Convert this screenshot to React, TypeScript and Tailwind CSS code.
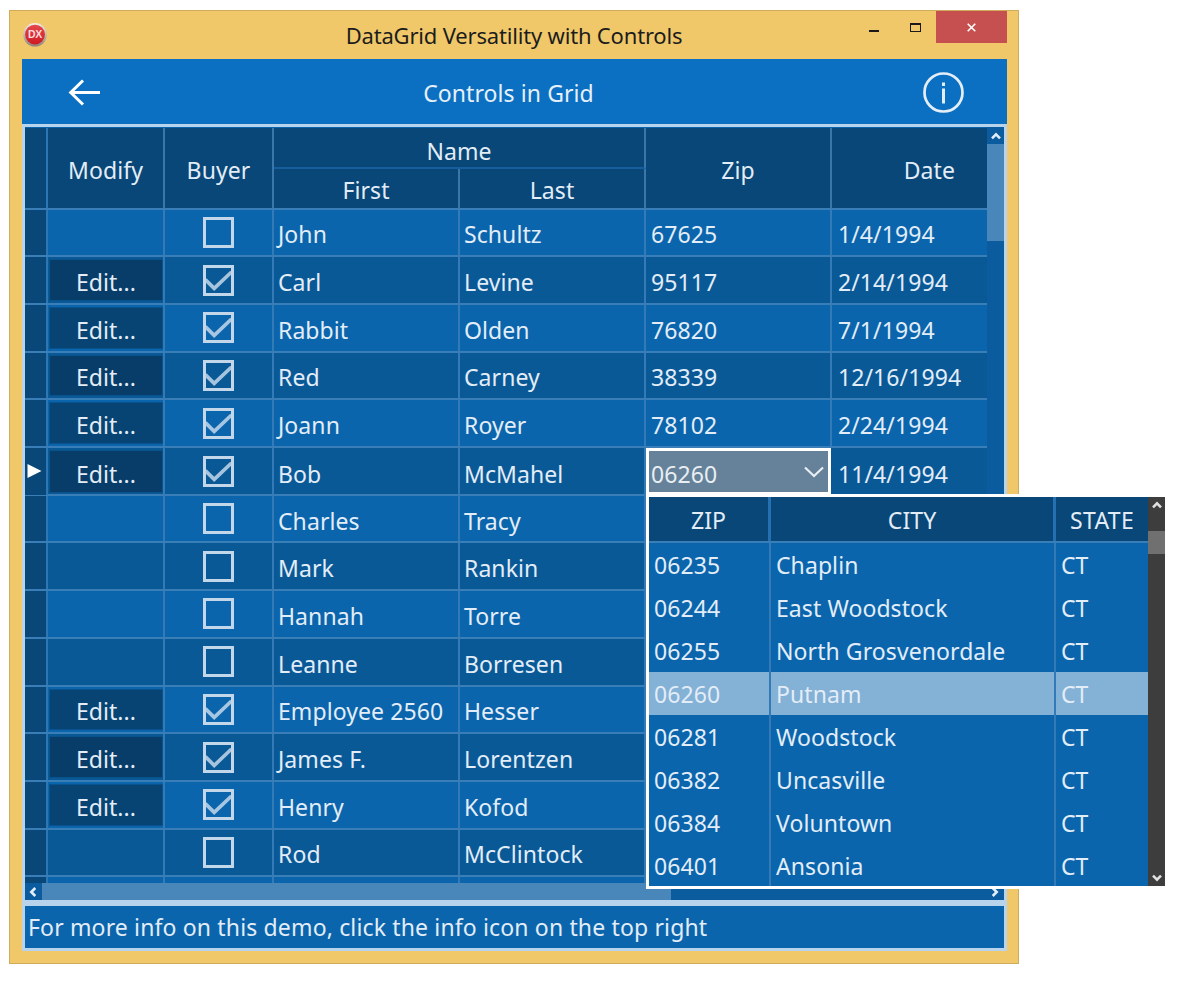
import { clsx } from 'clsx';

type Person = {
  buyer: boolean;
  first: string;
  last: string;
  zip?: string;
  date?: string;
};

const people: Person[] = [
  { buyer: false, first: 'John', last: 'Schultz', zip: '67625', date: '1/4/1994' },
  { buyer: true, first: 'Carl', last: 'Levine', zip: '95117', date: '2/14/1994' },
  { buyer: true, first: 'Rabbit', last: 'Olden', zip: '76820', date: '7/1/1994' },
  { buyer: true, first: 'Red', last: 'Carney', zip: '38339', date: '12/16/1994' },
  { buyer: true, first: 'Joann', last: 'Royer', zip: '78102', date: '2/24/1994' },
  { buyer: true, first: 'Bob', last: 'McMahel', zip: '06260', date: '11/4/1994' },
  { buyer: false, first: 'Charles', last: 'Tracy' },
  { buyer: false, first: 'Mark', last: 'Rankin' },
  { buyer: false, first: 'Hannah', last: 'Torre' },
  { buyer: false, first: 'Leanne', last: 'Borresen' },
  { buyer: true, first: 'Employee 2560', last: 'Hesser' },
  { buyer: true, first: 'James F.', last: 'Lorentzen' },
  { buyer: true, first: 'Henry', last: 'Kofod' },
  { buyer: false, first: 'Rod', last: 'McClintock' },
];

const cities = [
  { zip: '06235', city: 'Chaplin' },
  { zip: '06244', city: 'East Woodstock' },
  { zip: '06255', city: 'North Grosvenordale' },
  { zip: '06260', city: 'Putnam' },
  { zip: '06281', city: 'Woodstock' },
  { zip: '06382', city: 'Uncasville' },
  { zip: '06384', city: 'Voluntown' },
  { zip: '06401', city: 'Ansonia' },
];

const activeRow = 5;
const selectedZip = '06260';

const gridColumns = 'grid grid-cols-[23px_117px_109px_186px_186px_186px_155px]';
const lookupColumns = 'grid grid-cols-[122px_285px_92px]';

function Chevron({ className }: { className?: string }) {
  return (
    <svg viewBox="0 0 12 8" className={clsx('w-3 h-2 shrink-0', className)} fill="none" stroke="currentColor" strokeWidth="2.6">
      <path d="M2 6.3 L6 2.3 L10 6.3" />
    </svg>
  );
}

function Checkbox({ checked }: { checked: boolean }) {
  return (
    <svg width="31" height="31" viewBox="0 0 31 31" fill="none" className="text-[#c3d7ea]" stroke="currentColor">
      <rect x="1.5" y="1.5" width="28" height="28" strokeWidth="3" />
      {checked && <path d="M2.3 14.6 L11.2 23.4 L28.5 7" strokeWidth="3.6" strokeOpacity="0.85" />}
    </svg>
  );
}

function TitleBar() {
  return (
    <div className="relative flex h-12 shrink-0 items-start">
      <svg width="24" height="26" viewBox="0 0 24 26" className="ml-[13px] mt-[11px]">
        <defs>
          <linearGradient id="rim" x1="0" y1="0" x2="0" y2="1">
            <stop offset="0" stopColor="#f3ede4" />
            <stop offset="1" stopColor="#8f8379" />
          </linearGradient>
          <linearGradient id="disc" x1="0" y1="0" x2="0" y2="1">
            <stop offset="0" stopColor="#e4474c" />
            <stop offset="1" stopColor="#cf1a22" />
          </linearGradient>
        </defs>
        <circle cx="12" cy="12.8" r="11.8" fill="url(#rim)" />
        <circle cx="12" cy="12.6" r="9.9" fill="url(#disc)" />
        <text x="12" y="16.2" textAnchor="middle" fontSize="10.5" fontWeight="700" fill="#fbdcdc" fontFamily="Liberation Sans, sans-serif" letterSpacing="-0.3">
          DX
        </text>
      </svg>
      <h1 className="absolute inset-x-0 top-2 text-center text-[22px] leading-8 tracking-[-0.18px] text-[#1c1c1c]">DataGrid Versatility with Controls</h1>
      <div className="ml-auto mr-[11px] flex">
        <div className="mt-[19px] h-[2px] w-[10px] bg-[#1a1a1a]" />
        <div className="ml-[31px] mt-3 h-[9px] w-[11px] border-[1.5px] border-t-2 border-[#1a1a1a]" />
        <div className="ml-[15px] flex h-8 w-[71px] items-center justify-center bg-[#c65050] pr-px text-white">
          <svg width="9" height="9" viewBox="0 0 9 9" fill="none" stroke="currentColor" strokeWidth="1.6">
            <path d="M0.7 0.7 L8.3 8.3 M8.3 0.7 L0.7 8.3" />
          </svg>
        </div>
      </div>
    </div>
  );
}

function AppHeader() {
  return (
    <div className="relative flex h-[65px] shrink-0 items-center justify-between bg-[#0b70c1] pl-[46px] pr-[43px] text-white">
      <svg width="33" height="28" viewBox="0 0 33 28" fill="none" stroke="currentColor" strokeWidth="3">
        <path d="M2.5 14.5 H32 M15 2.5 L2.7 14.5 L15 26.5" />
      </svg>
      <div className="absolute inset-x-0 top-[18px] pr-3 text-center text-[#e6f0fa]">Controls in Grid</div>
      <svg width="41" height="41" viewBox="0 0 41 41" fill="none" className="mt-0.5 text-[#e3eef9]" stroke="currentColor">
        <circle cx="20.5" cy="20.5" r="19" strokeWidth="2.7" />
        <path d="M20.5 10.5 V14 M20.5 16.5 V31.5" strokeWidth="3" />
      </svg>
    </div>
  );
}

function GridHeader() {
  const cell = 'flex items-center justify-center border-r-2 border-[#3b76a8]';
  return (
    <div className={clsx(gridColumns, 'h-[82.5px] shrink-0 border-b-2 border-t border-b-[#3a7eb8] border-t-[#0963ad] bg-[#084777]')}>
      <div className="border-r-2 border-[#2d78b4]" />
      <div className={clsx(cell, 'pt-1')}>Modify</div>
      <div className={clsx(cell, 'pt-1')}>Buyer</div>
      <div className="col-span-2 grid grid-cols-2 grid-rows-[41px_39px]">
        <div className={clsx(cell, 'col-span-2 border-b-2 border-b-[#165e9c] pt-1.5')}>Name</div>
        <div className={clsx(cell, 'pt-[3px]')}>First</div>
        <div className={clsx(cell, 'pt-[3px]')}>Last</div>
      </div>
      <div className={clsx(cell, 'pt-1')}>Zip</div>
      <div className="flex items-center justify-end pr-8 pt-1">Date</div>
    </div>
  );
}

function ZipEditor({ value }: { value?: string }) {
  return (
    <div className="flex h-[47px] w-[185px] items-center justify-between border-[3px] border-white bg-[#65829a] pl-[2px] pr-1 text-[#e9eef2]">
      <span className="mt-1">{value}</span>
      <svg width="20" height="12" viewBox="0 0 20 12" fill="none" stroke="currentColor" strokeWidth="2.2">
        <path d="M1 1.5 L10 10 L19 1.5" />
      </svg>
    </div>
  );
}

function GridRow({ person, index }: { person: Person; index: number }) {
  const active = index === activeRow;
  const cell = 'flex items-center border-r-2 border-[#337ab6] pl-[5px] pt-1';
  return (
    <div className={clsx(gridColumns, 'h-[47.71px] shrink-0 border-b-2 border-[#3a7eb8]', index % 2 === 0 ? 'bg-[#0a65ad]' : 'bg-[#0a5997]')}>
      <div className="flex items-center border-r-2 border-[#2d78b4] bg-[#084777] pl-[2px]">
        {active && (
          <svg width="15" height="14" viewBox="0 0 15 14" className="-mt-0.5 shrink-0">
            <path d="M0.5 0 L14.5 7 L0.5 14 Z" fill="#fff" />
          </svg>
        )}
      </div>
      <div className="border-r-2 border-[#337ab6] py-[2px] pl-px">
        {person.buyer && (
          <div className={clsx('flex h-full items-center justify-center border border-[#08528d] pt-1', index % 2 === 0 ? 'bg-[#084473]' : 'bg-[#093d69]')}>
            Edit...
          </div>
        )}
      </div>
      <div className="flex items-center justify-center border-r-2 border-[#337ab6]">
        <Checkbox checked={person.buyer} />
      </div>
      <div className={clsx(cell, '-indent-px')}>{person.first}</div>
      <div className={clsx(cell, '-indent-px')}>{person.last}</div>
      {active ? <ZipEditor value={person.zip} /> : <div className={cell}>{person.zip}</div>}
      <div className="flex items-center pl-[6px] pt-1">{person.date}</div>
    </div>
  );
}

function ZipLookup() {
  return (
    <div className="absolute left-[646px] top-[494px] flex h-[395px] w-[520px] text-[#e3edf7]">
      <div className="flex h-full w-[502px] shrink-0 flex-col overflow-hidden border-y-[3px] border-l-[3px] border-white bg-[#0a65ad]">
        <div className={clsx(lookupColumns, 'h-[46px] shrink-0 border-b-2 border-[#3a7eb8] bg-[#084777]')}>
          <div className="flex items-center justify-center border-r-[3px] border-[#2470b0] pt-px">ZIP</div>
          <div className="flex items-center justify-center border-r-[3px] border-[#2470b0] pt-px">CITY</div>
          <div className="flex items-center justify-center pt-px tracking-[0.3px]">STATE</div>
        </div>
        {cities.map((entry) => (
          <div key={entry.zip} className={clsx(lookupColumns, 'h-[43.1px] shrink-0', entry.zip === selectedZip && 'bg-[#84b1d6]')}>
            <div className="flex items-center border-r-2 border-[#337ab6] pl-[5px]">{entry.zip}</div>
            <div className="flex items-center border-r-2 border-[#337ab6] pl-[5px]">{entry.city}</div>
            <div className="flex items-center pl-[5px]">CT</div>
          </div>
        ))}
      </div>
      <div className="mb-[3px] mt-[3px] flex w-[17px] flex-col items-center bg-[#3d3d3d] text-[#e0e0e0]">
        <Chevron className="mt-[4px]" />
        <div className="mt-[22px] h-[23px] w-full bg-[#707070]" />
        <Chevron className="mb-[4px] mt-auto rotate-180" />
      </div>
    </div>
  );
}

export default function App() {
  return (
    <div className="relative h-[985px] w-[1200px] overflow-hidden bg-white pl-[9px] pt-[10px] font-['Noto_Sans',sans-serif] text-[23px] leading-8 tracking-[0.08px]">
      <div className="flex h-[954px] w-[1010px] flex-col border border-[#cfac5b] bg-[#f0c869]">
        <TitleBar />
        <div className="mx-3 flex w-[985px] flex-col">
          <AppHeader />
          <div className="flex h-[827px] flex-col gap-[6px] border-[3px] border-[#b8d3ec] bg-[#b8d3ec] text-[#e3edf7]">
            <div className="flex h-[773px] w-[979px] flex-col">
              <div className="flex h-[756px]">
                <div className="flex w-[962px] flex-col overflow-hidden">
                  <GridHeader />
                  {people.map((person, index) => (
                    <GridRow key={person.first} person={person} index={index} />
                  ))}
                  <div className={clsx(gridColumns, 'h-5 shrink-0 bg-[#0a65ad]')}>
                    <div className="border-r-2 border-[#2d78b4] bg-[#084777]" />
                    <div className="border-r-2 border-[#337ab6]" />
                    <div className="border-r-2 border-[#337ab6]" />
                    <div className="border-r-2 border-[#337ab6]" />
                    <div className="border-r-2 border-[#337ab6]" />
                  </div>
                </div>
                <div className="flex w-[17px] flex-col items-center bg-[#0a5c9f]">
                  <Chevron className="mt-[5px]" />
                  <div className="mt-[4px] h-[97px] w-full bg-[#4987ba]" />
                </div>
              </div>
              <div className="flex h-[17px] items-center bg-[#0a5c9f]">
                <Chevron className="ml-[2px] -rotate-90" />
                <div className="ml-[3px] h-full w-[629px] bg-[#4987ba]" />
                <Chevron className="ml-auto mr-[3px] rotate-90" />
              </div>
            </div>
            <div className="flex h-[42px] items-center bg-[#0a65ad] pl-[3px]">
              <span className="whitespace-nowrap tracking-[0.15px]">For more info on this demo, click the info icon on the top right</span>
            </div>
          </div>
        </div>
      </div>
      <ZipLookup />
    </div>
  );
}
